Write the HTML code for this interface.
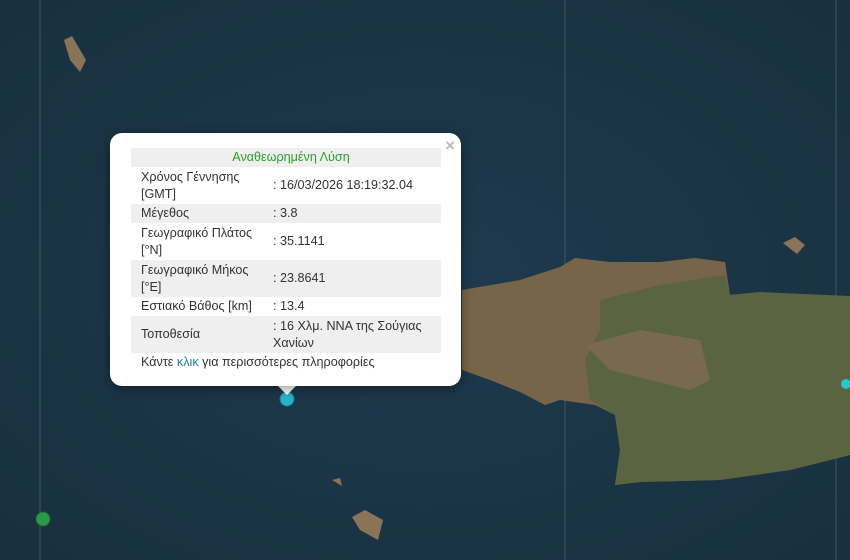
<!DOCTYPE html>
<html><head><meta charset="utf-8"><style>
body{margin:0;width:850px;height:560px;overflow:hidden;font-family:"Liberation Sans",sans-serif;background:#1d3446}
.map{position:absolute;left:0;top:0}
.pop{position:absolute;left:110px;top:133px;width:351px;height:253px;background:#fff;border-radius:12px;box-shadow:0 3px 12px rgba(0,0,0,.4)}
.tip{position:absolute;left:277px;top:385px;width:0;height:0;border-left:10px solid transparent;border-right:10px solid transparent;border-top:10px solid #fff}
.x{position:absolute;right:6px;top:3px;color:#bbb;font-size:17px;font-weight:bold}
table{position:absolute;left:21px;top:15px;width:310px;border-collapse:collapse;font-size:12.6px;color:#333}
td{padding:0 0 0 10px;line-height:17px;vertical-align:middle}
tr.g{background:#efefef}
.h{color:#2aa12a;text-align:center;height:19px}
.f{position:absolute;left:31px;top:222px;font-size:12.6px;color:#333}
.f b{color:#1a7fb3;font-weight:normal}
</style></head><body>
<svg class="map" width="850" height="560">
<defs><radialGradient id="o" cx="0.5" cy="0.5" r="0.7"><stop offset="0" stop-color="#1f3a4e"/><stop offset="1" stop-color="#18303f"/></radialGradient></defs>
<rect width="850" height="560" fill="url(#o)"/>
<line x1="40" y1="0" x2="40" y2="560" stroke="#3e5666" stroke-width="1"/>
<line x1="565" y1="0" x2="565" y2="560" stroke="#3e5666" stroke-width="1"/>
<line x1="836" y1="0" x2="836" y2="560" stroke="#3e5666" stroke-width="1"/>
<polygon points="462,290 520,280 560,267 575,258 610,262 660,262 695,258 725,262 730,295 760,292 780,296 850,296 850,455 790,470 720,480 640,482 615,485 620,450 615,415 595,405 560,400 545,405 520,392 490,380 462,370" fill="#77654a"/>
<polygon points="600,300 660,285 725,275 730,295 760,292 850,296 850,455 790,470 720,480 640,482 615,485 620,450 615,415 590,400 585,360 600,330" fill="#5a6440"/>
<polygon points="585,345 640,330 700,340 710,380 690,390 650,380 610,370" fill="#786a52"/>
<polygon points="783,243 795,237 805,245 797,254" fill="#8a7458"/>
<polygon points="64,40 72,36 86,60 80,72 70,60" fill="#8a7458"/>
<polygon points="352,517 365,510 383,520 378,540 360,530" fill="#8a7458"/>
<polygon points="332,480 340,478 342,486" fill="#8a7458"/>
<circle cx="287" cy="399" r="7" fill="#2bb3c8" stroke="#1a7f90"/>
<circle cx="43" cy="519" r="7" fill="#2a9a4a" stroke="#1c6a33"/>
<circle cx="846" cy="384" r="5" fill="#2bc3d8"/>
</svg>
<div class="tip"></div>
<div class="pop"><div class="x">×</div>
<table>
<tr class="g"><td colspan="2" class="h">Αναθεωρημένη Λύση</td></tr>
<tr style="height:37px"><td style="width:132px">Χρόνος Γέννησης<br>[GMT]</td><td style="padding-left:0">: 16/03/2026 18:19:32.04</td></tr>
<tr class="g" style="height:19px"><td>Μέγεθος</td><td style="padding-left:0">: 3.8</td></tr>
<tr style="height:37px"><td>Γεωγραφικό Πλάτος<br>[°N]</td><td style="padding-left:0">: 35.1141</td></tr>
<tr class="g" style="height:37px"><td>Γεωγραφικό Μήκος<br>[°E]</td><td style="padding-left:0">: 23.8641</td></tr>
<tr style="height:19px"><td>Εστιακό Βάθος [km]</td><td style="padding-left:0">: 13.4</td></tr>
<tr class="g" style="height:37px"><td>Τοποθεσία</td><td style="padding-left:0">: 16 Χλμ. ΝΝΑ της Σούγιας<br>Χανίων</td></tr>
</table>
<div class="f">Κάντε <b>κλικ</b> για περισσότερες πληροφορίες</div>
</div>
</body></html>
